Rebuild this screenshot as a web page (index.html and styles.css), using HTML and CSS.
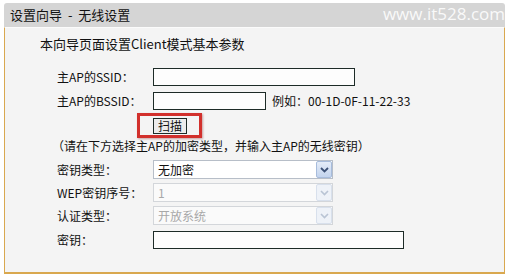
FILE: index.html
```html
<!DOCTYPE html>
<html lang="zh-CN">
<head>
<meta charset="utf-8">
<title>设置向导 - 无线设置</title>
<link rel="stylesheet" href="styles.css">
</head>
<body>
<div class="wizard">
  <div class="wizard-head">
    <span class="title">设置向导 - 无线设置</span>
    <span class="mark">www.it528.com</span>
  </div>
  <div class="wizard-body">
    <p class="intro">本向导页面设置Client模式基本参数</p>
    <div class="form">
      <div class="row r24">
        <span class="lbl">主AP的SSID：</span>
        <span class="txt w-ssid"></span>
      </div>
      <div class="row r24">
        <span class="lbl">主AP的BSSID：</span>
        <span class="txt w-bssid"></span>
        <span class="hint">例如：00-1D-0F-11-22-33</span>
      </div>
      <div class="row r23">
        <span class="lbl"></span>
        <span class="scan-wrap">
          <span class="scan">扫描</span>
          <span class="highlight"></span>
        </span>
      </div>
      <div class="note">（请在下方选择主AP的加密类型，并输入主AP的无线密钥）</div>
      <div class="row r23">
        <span class="lbl">密钥类型：</span>
        <span class="sel">
          <span class="sel-val">无加密</span>
          <span class="sel-btn"><svg width="9" height="6" viewBox="0 0 9 6"><polyline points="1,1 4.5,4.5 8,1" fill="none" stroke="#3c5176" stroke-width="1.8"/></svg></span>
        </span>
      </div>
      <div class="row r23">
        <span class="lbl">WEP密钥序号：</span>
        <span class="sel off">
          <span class="sel-val">1</span>
          <span class="sel-btn"><svg width="9" height="6" viewBox="0 0 9 6"><polyline points="1,1 4.5,4.5 8,1" fill="none" stroke="#b9c4d4" stroke-width="1.6"/></svg></span>
        </span>
      </div>
      <div class="row r23">
        <span class="lbl">认证类型：</span>
        <span class="sel off">
          <span class="sel-val">开放系统</span>
          <span class="sel-btn"><svg width="9" height="6" viewBox="0 0 9 6"><polyline points="1,1 4.5,4.5 8,1" fill="none" stroke="#b9c4d4" stroke-width="1.6"/></svg></span>
        </span>
      </div>
      <div class="row r26">
        <span class="lbl">密钥：</span>
        <span class="txt w-key"></span>
      </div>
    </div>
  </div>
</div>
</body>
</html>
```
FILE: styles.css
```css
* { box-sizing: border-box; }
html, body { margin: 0; padding: 0; background: #ffffff; }
body {
  font-family: "Noto Sans CJK SC", "Liberation Sans", sans-serif;
  font-size: 12px;
  color: #111;
  width: 508px;
  height: 277px;
  overflow: hidden;
}
.wizard {
  margin: 3px 3px 0 4px;
  width: 501px;
}
.wizard-head {
  height: 24px;
  background: #d5d5d5;
  border-radius: 3px 3px 0 0;
  display: flex;
  align-items: center;
  justify-content: space-between;
  padding: 0 0 0 6px;
}
.title {
  font-size: 13px;
  line-height: 16px;
  color: #111;
  word-spacing: 3px;
}
.mark {
  font-family: "Open Sans", "DejaVu Sans", sans-serif;
  font-size: 17px;
  line-height: 20px;
  color: rgba(255,255,255,0.88);
  margin-top: -2px;
}
.wizard-body {
  height: 247px;
  background: #f4f4f4;
  border-top: 1px solid #fbfbfb;
  border-left: 1px solid #d9a84f;
  border-right: 1px solid #d9a84f;
  border-bottom: 2px solid #d9a84f;
  padding-top: 8px;
}
.intro {
  margin: 0 0 13px 35px;
  font-size: 13px;
  line-height: 16px;
}
.form {
  padding-left: 52px;
}
.row {
  display: flex;
  align-items: center;
}
.r24 { height: 24px; }
.r23 { height: 23px; }
.r26 { height: 26px; }
.lbl {
  width: 96px;
  flex: none;
  line-height: 16px;
}
.txt {
  display: block;
  height: 18px;
  background: #fdfdfd;
  border: 1px solid #1d2b27;
}
.w-ssid { width: 202px; }
.w-bssid { width: 113px; }
.w-key { width: 251px; }
.hint {
  margin-left: 6px;
  line-height: 16px;
}
.scan-wrap {
  position: relative;
  display: block;
}
.scan {
  display: flex;
  align-items: center;
  justify-content: center;
  width: 34px;
  height: 16px;
  border: 1px solid #1d2b27;
  background: #ececec;
  font-size: 12px;
  line-height: 14px;
  margin-top: 2px;
}
.highlight {
  position: absolute;
  left: -16px;
  top: -3px;
  width: 65px;
  height: 25px;
  border: 3px solid #d2302c;
  box-shadow: 1px 1px 2px rgba(120,0,0,0.35);
}
.note {
  height: 22px;
  line-height: 20px;
  margin-left: -5px;
}
.sel {
  display: flex;
  width: 180px;
  height: 19px;
  border: 1px solid #b7bec8;
  background: #ffffff;
}
.sel-val {
  flex: 1;
  padding-left: 4px;
  line-height: 17px;
}
.sel-btn {
  width: 16px;
  height: 17px;
  display: flex;
  align-items: center;
  justify-content: center;
  background: linear-gradient(#e4ecf8, #c3d4ee);
  border: 1px solid #a7bcdc;
  border-radius: 2px;
}
.sel.off {
  border-color: #d3d6da;
  background: #fafafa;
}
.sel.off .sel-val { color: #a8a8a8; }
.sel.off .sel-btn {
  background: #eef2f8;
  border-color: #d8e0ec;
}
```
